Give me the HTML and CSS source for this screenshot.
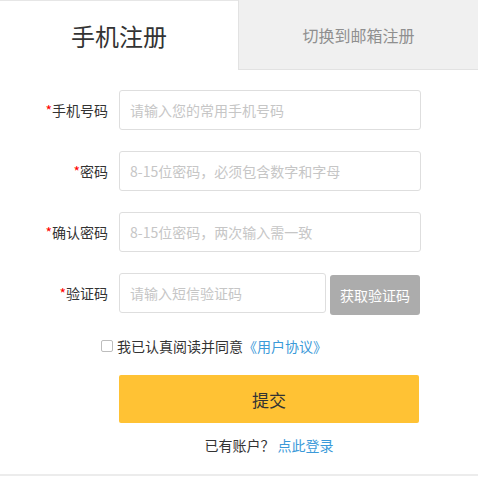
FILE: index.html
```html
<!DOCTYPE html>
<html lang="zh-CN">
<head>
<meta charset="utf-8">
<title>手机注册</title>
<link rel="stylesheet" href="styles.css">
</head>
<body>
<div class="page">
  <div class="tabs">
    <div class="tab tab-active">手机注册</div>
    <div class="tab tab-other">切换到邮箱注册</div>
  </div>
  <form class="form">
    <div class="row">
      <label class="label"><span class="req">*</span>手机号码</label>
      <input class="input" type="text" placeholder="请输入您的常用手机号码">
    </div>
    <div class="row">
      <label class="label"><span class="req">*</span>密码</label>
      <input class="input" type="password" placeholder="8-15位密码，必须包含数字和字母">
    </div>
    <div class="row">
      <label class="label"><span class="req">*</span>确认密码</label>
      <input class="input" type="password" placeholder="8-15位密码，两次输入需一致">
    </div>
    <div class="row">
      <label class="label"><span class="req">*</span>验证码</label>
      <input class="input input-code" type="text" placeholder="请输入短信验证码">
      <button class="code-btn" type="button">获取验证码</button>
    </div>
    <div class="agree">
      <span class="check"></span>
      <span class="agree-text">我已认真阅读并同意<a class="link" href="#">《用户协议》</a></span>
    </div>
    <button class="submit" type="button">提交</button>
    <div class="login">已有账户<span class="punct">？</span> <a class="link" href="#">点此登录</a></div>
  </form>
  <div class="bottom-line"></div>
</div>
</body>
</html>
```

FILE: styles.css
```css
* { box-sizing: border-box; }
body {
  margin: 0;
  background: #fff;
  font-family: "Noto Sans CJK SC", "Noto Sans", sans-serif;
  color: #333;
}
.page { width: 478px; }
.tabs {
  display: flex;
  height: 70px;
}
.tab {
  display: flex;
  align-items: center;
  justify-content: center;
}
.tab-active {
  width: 238px;
  border-top: 1px solid #e6e6e6;
  font-size: 24px;
  color: #333;
  padding-bottom: 1px;
}
.tab-other {
  flex: 1;
  background: #f0f0f0;
  border-left: 1px solid #e2e2e2;
  border-bottom: 1px solid #e2e2e2;
  font-size: 16px;
  color: #8f8f8f;
}
.form {
  display: flex;
  flex-direction: column;
  padding-top: 20px;
}
.row {
  display: flex;
  align-items: flex-start;
  height: 40px;
  margin-bottom: 21px;
}
.label {
  width: 109px;
  text-align: right;
  font-size: 14px;
  line-height: 40px;
  color: #333;
  padding-right: 1px;
}
.req { color: #f00; }
.input {
  margin-left: 10px;
  width: 302px;
  height: 40px;
  border: 1px solid #dedede;
  border-radius: 3px;
  padding: 0 10px;
  font-size: 14px;
  font-family: "Noto Sans CJK TC", "Noto Sans CJK SC", sans-serif;
  color: #333;
  outline: none;
}
.input::placeholder { color: #c6c6c6; }
.input-code { width: 207px; }
.code-btn {
  margin-left: 4px;
  margin-top: 2px;
  width: 90px;
  height: 40px;
  border: none;
  border-radius: 3px;
  background: #acacac;
  color: #fff;
  font-size: 14px;
  font-family: inherit;
  padding: 0;
}
.agree {
  display: flex;
  align-items: center;
  margin-top: 2px;
  padding-left: 101px;
  height: 20px;
}
.check {
  width: 12px;
  height: 12px;
  border: 1px solid #bdbdbd;
  border-radius: 2px;
  margin-right: 4px;
  background: #fff;
}
.agree-text { font-size: 14px; color: #333; }
.link { color: #3b9ad9; text-decoration: none; }
.punct { font-family: "Noto Sans CJK TC", sans-serif; }
.submit {
  margin-top: 19px;
  margin-left: 119px;
  width: 300px;
  height: 48px;
  border: none;
  border-radius: 2px;
  background: #ffc234;
  color: #333;
  font-size: 17px;
  font-family: inherit;
  padding: 0;
}
.login {
  margin-left: 119px;
  width: 300px;
  text-align: center;
  font-size: 14px;
  margin-top: 12px;
  line-height: 20px;
  color: #333;
}
.bottom-line {
  margin-top: 19px;
  height: 2px;
  background: #ececec;
}
```
